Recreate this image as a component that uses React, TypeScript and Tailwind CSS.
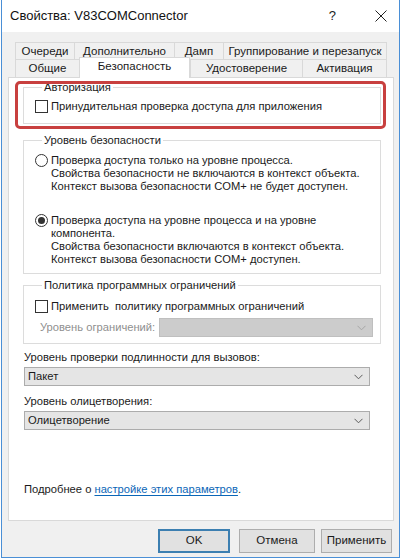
import React from 'react';

const font = { fontFamily: '"Liberation Sans", Arial, sans-serif' };

function Chevron({ color = '#5c5c5c' }: { color?: string }) {
  return (
    <svg width="9" height="6" viewBox="0 0 9 6" className="block">
      <path d="M0.5 0.8 L4.5 4.8 L8.5 0.8" fill="none" stroke={color} strokeWidth="1" />
    </svg>
  );
}

function CheckBox() {
  return <span className="inline-block w-[13px] h-[13px] border border-[#333] bg-white shrink-0" />;
}

function Radio({ checked }: { checked?: boolean }) {
  return (
    <span className="w-[13px] h-[13px] rounded-full border border-[#333] bg-white shrink-0 flex items-center justify-center">
      {checked && <span className="w-[7px] h-[7px] rounded-full bg-[#333]" />}
    </span>
  );
}

function Combo({ value, disabled }: { value?: string; disabled?: boolean }) {
  return (
    <div
      className={`h-[19px] flex items-center justify-between pl-[3px] pr-[6px] border ${
        disabled ? 'bg-[#cccccc] border-[#bfbfbf]' : 'bg-[#e5e5e5] border-[#acacac]'
      }`}
    >
      <span className="text-[11.2px] leading-[13px] text-[#1a1a1a]">{value}</span>
      <Chevron color={disabled ? '#a6a6a6' : '#5c5c5c'} />
    </div>
  );
}

function Tab({ label, w, last, selected }: { label: string; w: number; last?: boolean; selected?: boolean }) {
  return (
    <div
      style={{ width: w }}
      className={`flex items-center justify-center border-t border-l border-[#d9d9d9] ${last ? 'border-r' : ''} ${
        selected ? 'bg-white h-[21px] border-r -mb-[1px] relative z-10 pb-[3px]' : 'h-full'
      }`}
    >
      <span className="text-[11.5px] leading-[13px] text-[#1a1a1a] whitespace-nowrap">{label}</span>
    </div>
  );
}

export default function App() {
  return (
    <div className="w-[402px] h-[560px] bg-white relative" style={font}>
      <div className="ml-[1px] w-[399px] h-[558px] border border-t-0 border-[#4a8fd6] flex flex-col">
        {/* title bar */}
        <div className="h-[32px] bg-white flex items-center pl-[8px] shrink-0">
          <span className="text-[13px] text-[#111]">Свойства: V83COMConnector</span>
          <span className="ml-auto mr-[39px] text-[13px] text-[#222]">?</span>
          <svg width="12" height="12" viewBox="0 0 12 12" className="mr-[12px]">
            <path d="M0.5 0.5 L11.5 11.5 M11.5 0.5 L0.5 11.5" stroke="#222" strokeWidth="1" />
          </svg>
        </div>

        {/* body */}
        <div className="flex-1 bg-[#f0f0f0] flex flex-col pt-[10px]">
          <div className="ml-[13px] w-[372px] h-[17px] flex">
            <Tab label="Очереди" w={59} />
            <Tab label="Дополнительно" w={100} />
            <Tab label="Дамп" w={49} />
            <Tab label="Группирование и перезапуск" w={164} last />
          </div>
          <div className="ml-[13px] w-[372px] h-[18px] flex items-end">
            <Tab label="Общие" w={64} />
            <Tab label="Безопасность" w={111} selected />
            <Tab label="Удостоверение" w={112} />
            <Tab label="Активация" w={85} last />
          </div>

          {/* panel */}
          <div className="ml-[6px] mr-[5px] h-[444px] bg-white border border-[#d9d9d9] flex flex-col text-[11.2px] leading-[13px] text-[#1a1a1a]">
            <fieldset className="ml-[14px] w-[358px] mt-[3px] border border-[#dcdcdc] pl-[11px] pb-[10px]">
              <legend className="ml-[7px] px-[2px]">Авторизация</legend>
              <div className="mt-[6px] flex items-center gap-[3px] h-[13px]">
                <CheckBox />
                <span>Принудительная проверка доступа для приложения</span>
              </div>
            </fieldset>

            <fieldset className="ml-[14px] w-[358px] mt-[10px] border border-[#dcdcdc] pl-[11px] pb-[7px]">
              <legend className="ml-[7px] px-[2px]">Уровень безопасности</legend>
              <div className="mt-[7px] flex items-start gap-[3px]">
                <Radio />
                <div>
                  Проверка доступа только на уровне процесса.
                  <br />
                  Свойства безопасности не включаются в контекст объекта.
                  <br />
                  Контекст вызова безопасности COM+ не будет доступен.
                </div>
              </div>
              <div className="mt-[21px] flex items-start gap-[3px]">
                <Radio checked />
                <div>
                  Проверка доступа на уровне процесса и на уровне
                  <br />
                  компонента.
                  <br />
                  Свойства безопасности включаются в контекст объекта.
                  <br />
                  Контекст вызова безопасности COM+ доступен.
                </div>
              </div>
            </fieldset>

            <fieldset className="ml-[14px] w-[358px] mt-[5px] border border-[#dcdcdc] pl-[11px] pb-[6px]">
              <legend className="ml-[7px] px-[2px]">Политика программных ограничений</legend>
              <div className="mt-[8px] flex items-center gap-[3px] h-[13px]">
                <CheckBox />
                <span className="whitespace-pre">Применить  политику программных ограничений</span>
              </div>
              <div className="mt-[5px] flex items-center">
                <span className="ml-[5px] text-[#8f8f8f] w-[119px] whitespace-nowrap">Уровень ограничений:</span>
                <div className="w-[214px]">
                  <Combo disabled />
                </div>
              </div>
            </fieldset>

            <div className="ml-[15px] w-[346px]">
              <div className="mt-[7px]">Уровень проверки подлинности для вызовов:</div>
              <div className="mt-[3px]">
                <Combo value="Пакет" />
              </div>
              <div className="mt-[9px]">Уровень олицетворения:</div>
              <div className="mt-[3px]">
                <Combo value="Олицетворение" />
              </div>
              <div className="mt-[53px]">
                Подробнее о{' '}
                <span className="text-[#0a66b7] underline underline-offset-2">настройке этих параметров</span>.
              </div>
            </div>
          </div>

          {/* buttons */}
          <div className="mt-[8px] flex text-[11.5px]">
            <button className="ml-[156px] w-[72px] h-[24px] bg-[#e1e1e1] border-2 border-[#3c7fb1] text-[#1a1a1a]">OK</button>
            <button className="ml-[9px] w-[76px] h-[24px] bg-[#e1e1e1] border border-[#adadad] text-[#1a1a1a]">Отмена</button>
            <button className="ml-[6px] w-[71px] h-[24px] bg-[#e1e1e1] border border-[#adadad] text-[#1a1a1a]">Применить</button>
          </div>
        </div>
      </div>

      {/* annotation highlight */}
      <div className="absolute left-[15px] top-[81px] w-[371px] h-[48px] border-[3px] border-[#c8403f] rounded-[5px] pointer-events-none" />
    </div>
  );
}
